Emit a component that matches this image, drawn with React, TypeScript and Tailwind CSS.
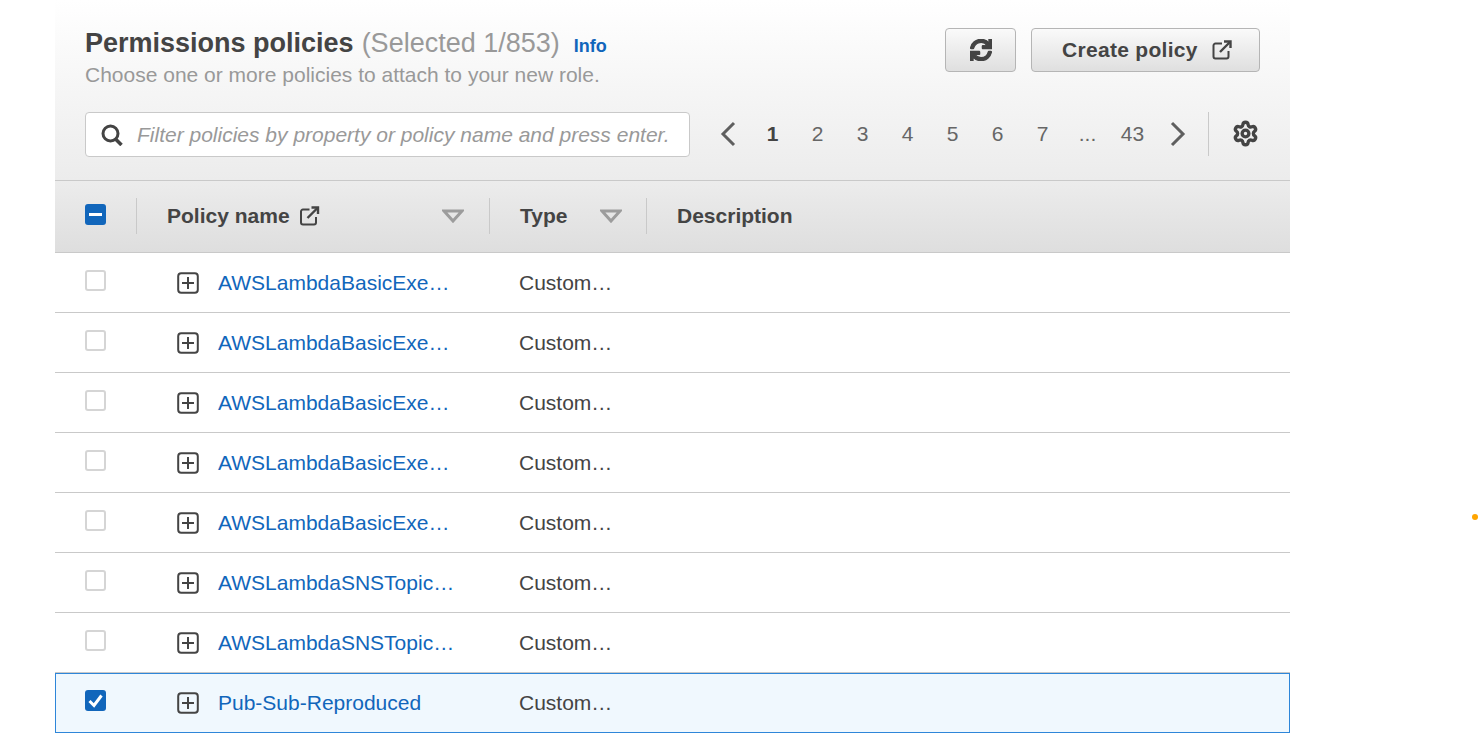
import { FaSync } from "react-icons/fa";
import { Settings } from "lucide-react";

function ExternalIcon({ className }: { className: string }) {
  return (
    <svg viewBox="0 0 20 20" fill="none" stroke="currentColor" strokeWidth="2" className={className}>
      <path d="M10 3.5H3.5a2 2 0 0 0-2 2V16.5a2 2 0 0 0 2 2H14.5a2 2 0 0 0 2-2V11" strokeLinejoin="round" />
      <path d="M8 12 18 2" strokeWidth="2.4" />
      <path d="M12 1.5h6.5v6.5" strokeWidth="2.4" />
    </svg>
  );
}

function SortCaret() {
  return (
    <svg viewBox="0 0 22 14" className="w-[22px] h-[14px]">
      <path d="M2 2h18l-9 10z" fill="none" stroke="#9c9c9c" strokeWidth="3" strokeLinejoin="miter" />
    </svg>
  );
}

function ExpandIcon() {
  return (
    <svg viewBox="0 0 22 22" fill="none" className="w-[22px] h-[22px] shrink-0">
      <rect x="1.2" y="1.2" width="19.6" height="19.6" rx="3" stroke="#444" strokeWidth="2" />
      <path d="M11 5v12M5 11h12" stroke="#444" strokeWidth="2" />
    </svg>
  );
}

function Checkbox({ state }: { state: "off" | "on" | "mixed" }) {
  if (state === "off") {
    return <div className="w-[21px] h-[21px] rounded-[3px] border-2 border-[#d5d5d5] bg-white" />;
  }
  return (
    <div className="w-[21px] h-[21px] rounded-[3px] bg-[#1166bb] flex items-center justify-center">
      {state === "mixed" ? (
        <div className="w-[13px] h-[3px] bg-white" />
      ) : (
        <svg viewBox="0 0 21 21" fill="none" className="w-[21px] h-[21px]">
          <path d="M4.5 11l4.5 4.5 7.5-10" stroke="white" strokeWidth="3" />
        </svg>
      )}
    </div>
  );
}

function Row({ name, selected }: { name: string; selected?: boolean }) {
  if (selected) {
    return (
      <div className="flex h-[60px] border border-[#2e86d9] bg-[#f0f8fe]">
        <div className="w-[29px] shrink-0" />
        <div className="w-[21px] pt-[16px]">
          <Checkbox state="on" />
        </div>
        <div className="w-[71px] shrink-0" />
        <div className="w-[22px] pt-[18px]">
          <ExpandIcon />
        </div>
        <div className="w-[320px] shrink-0 pl-[19px] pt-[16px] text-[21px] leading-[26px] text-[#1166bb] whitespace-nowrap">
          {name}
        </div>
        <div className="pt-[16px] text-[21px] leading-[26px] text-[#444] whitespace-nowrap">Custom…</div>
      </div>
    );
  }
  return (
    <div className="flex h-[60px] border-b border-[#c9c9c9]">
      <div className="w-[30px] shrink-0" />
      <div className="w-[21px] pt-[17px]">
        <Checkbox state="off" />
      </div>
      <div className="w-[71px] shrink-0" />
      <div className="w-[22px] pt-[19px]">
        <ExpandIcon />
      </div>
      <div className="w-[320px] shrink-0 pl-[19px] pt-[17px] text-[21px] leading-[26px] text-[#1166bb] whitespace-nowrap">
        {name}
      </div>
      <div className="pt-[17px] text-[21px] leading-[26px] text-[#444] whitespace-nowrap">Custom…</div>
    </div>
  );
}

const pages = ["2", "3", "4", "5", "6", "7", "..."];

export default function App() {
  const rows = [
    "AWSLambdaBasicExe…",
    "AWSLambdaBasicExe…",
    "AWSLambdaBasicExe…",
    "AWSLambdaBasicExe…",
    "AWSLambdaBasicExe…",
    "AWSLambdaSNSTopic…",
    "AWSLambdaSNSTopic…",
  ];
  return (
    <div className="w-[1479px] h-[738px] overflow-hidden bg-white relative font-['Liberation_Sans',Arial,sans-serif]">
      <div className="ml-[55px] w-[1235px]">
        <div className="h-[181px] bg-gradient-to-b from-white to-[#ececec] border-b border-[#c9c9c9] px-[30px] pt-[28px]">
          <div className="flex justify-between h-[61px]">
            <div>
              <div className="flex items-baseline h-[30px] leading-[30px]">
                <span className="text-[27px] font-bold text-[#444]">Permissions policies</span>
                <span className="text-[27px] text-[#999] ml-[8px]">(Selected 1/853)</span>
                <span className="text-[18px] font-bold text-[#1166bb] ml-[14px]">Info</span>
              </div>
              <div className="text-[21px] leading-[28px] text-[#999] mt-[3px]">
                Choose one or more policies to attach to your new role.
              </div>
            </div>
            <div className="flex gap-[15px]">
              <div className="w-[71px] h-[44px] rounded-[4px] border border-[#b5b5b5] bg-gradient-to-b from-[#fafafa] to-[#dfdfdf] flex items-center justify-center text-[#444]">
                <FaSync className="w-[22px] h-[22px]" stroke="currentColor" strokeWidth={30} />
              </div>
              <div className="w-[229px] h-[44px] rounded-[4px] border border-[#b5b5b5] bg-gradient-to-b from-[#fafafa] to-[#dfdfdf] flex items-center pl-[30px] text-[#444]">
                <span className="text-[21px] font-bold tracking-[0.3px] whitespace-nowrap">Create policy</span>
                <ExternalIcon className="w-[20px] h-[20px] ml-[14px]" />
              </div>
            </div>
          </div>
          <div className="flex items-center mt-[23px] h-[45px]">
            <div className="w-[605px] h-[45px] rounded-[4px] border border-[#c9c9c9] bg-white flex items-center pl-[15px] shrink-0">
              <svg viewBox="0 0 22 22" fill="none" stroke="#444" className="w-[22px] h-[22px] shrink-0">
                <circle cx="9.5" cy="9.5" r="7.5" strokeWidth="3" />
                <path d="M14.5 15l6 6" strokeWidth="3.5" />
              </svg>
              <span className="ml-[14px] text-[21px] italic text-[#999] whitespace-nowrap">
                Filter policies by property or policy name and press enter.
              </span>
            </div>
            <div className="flex items-center mb-[2px]">
              <svg viewBox="0 0 16 26" fill="none" stroke="#5f5f5f" strokeWidth="3" className="w-[16px] h-[26px] ml-[30px]">
                <path d="M14 2 3 13l11 11" />
              </svg>
              <span className="w-[45px] ml-[14px] text-center text-[21px] font-bold text-[#444]">1</span>
              {pages.map((p) => (
                <span key={p} className="w-[45px] text-center text-[21px] text-[#666]">
                  {p}
                </span>
              ))}
              <span className="w-[45px] text-center text-[21px] text-[#666]">43</span>
              <svg viewBox="0 0 16 26" fill="none" stroke="#5f5f5f" strokeWidth="3" className="w-[16px] h-[26px] ml-[15px]">
                <path d="M2 2l11 11L2 24" />
              </svg>
              <div className="w-px h-[44px] bg-[#c9c9c9] ml-[22px]" />
              <Settings className="w-[27px] h-[27px] ml-[23px] text-[#444]" strokeWidth={3} />
            </div>
          </div>
        </div>
        <div className="h-[72px] bg-gradient-to-b from-[#ececec] to-[#dedede] border-b border-[#c9c9c9] flex items-center pb-[2px]">
          <div className="ml-[30px] w-[21px] -mt-[2px]">
            <Checkbox state="mixed" />
          </div>
          <div className="w-px h-[36px] bg-[#c9c9c9] ml-[30px]" />
          <div className="w-[352px] flex items-center pl-[30px] pr-[25px] text-[21px] font-bold text-[#444]">
            <span>Policy name</span>
            <ExternalIcon className="w-[21px] h-[20px] ml-[9px]" />
            <div className="ml-auto mt-[1px]">
              <SortCaret />
            </div>
          </div>
          <div className="w-px h-[36px] bg-[#c9c9c9]" />
          <div className="w-[156px] flex items-center pl-[30px] pr-[24px] text-[21px] font-bold text-[#444]">
            <span>Type</span>
            <div className="ml-auto mt-[1px]">
              <SortCaret />
            </div>
          </div>
          <div className="w-px h-[36px] bg-[#c9c9c9]" />
          <div className="pl-[30px] text-[21px] font-bold text-[#444]">Description</div>
        </div>
        {rows.map((r, i) => (
          <Row key={i} name={r} />
        ))}
        <Row name="Pub-Sub-Reproduced" selected />
      </div>
      <div className="absolute left-[1472px] top-[514px] w-[6px] h-[6px] rounded-full bg-[#ffa500]" />
    </div>
  );
}
